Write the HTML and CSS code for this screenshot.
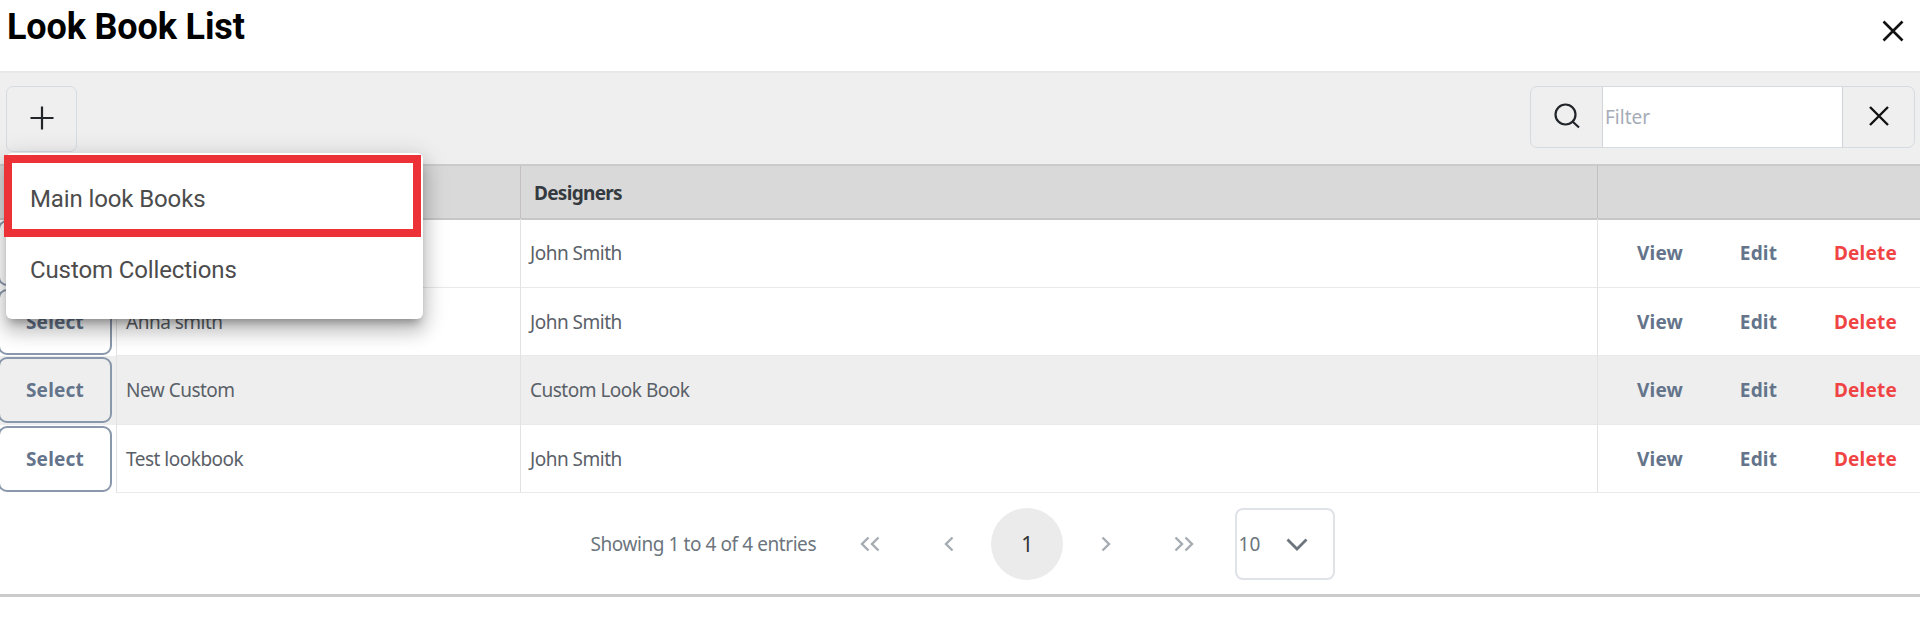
FILE: index.html
```
<!DOCTYPE html>
<html lang="en">
<head>
<meta charset="UTF-8">
<meta name="viewport" content="width=device-width, initial-scale=1.0">
<title>Look Book List</title>
<link rel="stylesheet" href="styles.css">
</head>
<body>
<div class="dialog">
    <div class="header">
        <h1>Look Book List</h1>
        <svg class="close" width="22" height="22" viewBox="0 0 22 22"><path d="M1.5 1.5L20.5 20.5M20.5 1.5L1.5 20.5"/></svg>
    </div>
    <div class="toolbar">
        <div class="add">
            <button class="add-btn" aria-label="Add"><svg width="24" height="24" viewBox="0 0 24 24"><path d="M12 .5V23.5M.5 12H23.5"/></svg></button>
            <div class="menu">
                <div class="item active"><span>Main look Books</span></div>
                <div class="item"><span>Custom Collections</span></div>
            </div>
        </div>
        <div class="search">
            <span class="addon"><svg width="26" height="26" viewBox="0 0 26 26"><circle cx="11.5" cy="11.5" r="10"/><path d="M18.5 18.5L25 24.5"/></svg></span>
            <input type="text" placeholder="Filter">
            <span class="addon"><svg class="clear" width="20" height="20" viewBox="0 0 20 20"><path d="M1 1L19 19M19 1L1 19"/></svg></span>
        </div>
    </div>
    <div class="table">
        <div class="row head">
            <div></div>
            <div></div>
            <div class="cell"><span>Designers</span></div>
            <div></div>
        </div>
        <div class="row">
            <div><button class="select" aria-label="Select"></button></div>
            <div class="cell"></div>
            <div class="cell">John Smith</div>
            <div class="actions"><a>View</a><a>Edit</a><a class="delete">Delete</a></div>
        </div>
        <div class="row">
            <div><button class="select">Select</button></div>
            <div class="cell">Anna smith</div>
            <div class="cell">John Smith</div>
            <div class="actions"><a>View</a><a>Edit</a><a class="delete">Delete</a></div>
        </div>
        <div class="row hover">
            <div><button class="select">Select</button></div>
            <div class="cell">New Custom</div>
            <div class="cell">Custom Look Book</div>
            <div class="actions"><a>View</a><a>Edit</a><a class="delete">Delete</a></div>
        </div>
        <div class="row">
            <div><button class="select">Select</button></div>
            <div class="cell">Test lookbook</div>
            <div class="cell">John Smith</div>
            <div class="actions"><a>View</a><a>Edit</a><a class="delete">Delete</a></div>
        </div>
    </div>
    <div class="paginator">
        <span class="info">Showing 1 to 4 of 4 entries</span>
        <span class="page"><svg width="20" height="16" viewBox="0 0 20 16"><path d="M8.5 1.5L2 8L8.5 14.5M18.5 1.5L12 8L18.5 14.5"/></svg></span>
        <span class="page"><svg width="10" height="16" viewBox="0 0 10 16"><path d="M8.5 1.5L2 8L8.5 14.5"/></svg></span>
        <span class="page current">1</span>
        <span class="page"><svg width="10" height="16" viewBox="0 0 10 16"><path d="M1.5 1.5L8 8L1.5 14.5"/></svg></span>
        <span class="page"><svg width="20" height="16" viewBox="0 0 20 16"><path d="M1.5 1.5L8 8L1.5 14.5M11.5 1.5L18 8L11.5 14.5"/></svg></span>
        <div class="rows-per-page">
            <span>10</span>
            <svg width="22" height="13" viewBox="0 0 22 13"><path d="M1.5 1.5L11 11L20.5 1.5"/></svg>
        </div>
    </div>
</div>
</body>
</html>
```
FILE: styles.css
```
*{margin:0;padding:0;box-sizing:border-box;}
body
{
    background: #fff;
    color: #5a6068;
    font-family: "Noto Sans", "Open Sans", sans-serif;
    font-size: 19px;
    overflow: hidden;
}
svg
{
    display: block;
    fill: none;
    stroke: #212529;
    stroke-width: 2.2;
}
.dialog
{
    height: 597px;
    border-bottom: 3px solid #cbcbcb;
}
.header
{
    display: flex;
    justify-content: space-between;
    height: 71px;
    padding: 6px 16px 0 7px;
    color: #000;
}
.header h1
{
    font: 700 36px/43px Roboto, sans-serif;
    letter-spacing: -.15px;
}
.close
{
    margin-top: 14px;
    stroke: #111;
    stroke-width: 2.6;
}
.toolbar
{
    display: flex;
    justify-content: space-between;
    height: 93px;
    padding: 13px 5px 0 6px;
    background: #efefef;
    border-top: 2px solid #e6e8ea;
}
.add
{
    position: relative;
}
.add-btn
{
    display: flex;
    align-items: center;
    justify-content: center;
    width: 71px;
    height: 66px;
    background: none;
    border: 1px solid #d6dbe0;
    border-radius: 7px;
}
.add-btn svg
{
    margin-bottom: 2px;
}
.menu
{
    position: absolute;
    z-index: 2;
    top: 67px;
    left: 0;
    width: 417px;
    height: 166px;
    background: #fff;
    border-radius: 6px;
    box-shadow: 0 7px 9px -4px rgba(0,0,0,.3), 0 12px 18px 2px rgba(0,0,0,.16), 0 5px 24px 4px rgba(0,0,0,.12);
}
.item
{
    display: flex;
    align-items: center;
    height: 66px;
    padding-left: 24px;
    color: #4c4c4c;
    font: 24px Roboto, sans-serif;
    letter-spacing: -.12px;
}
.item.active
{
    width: 417px;
    height: 82px;
    margin: 2px 0 0 -2px;
    padding-left: 18px;
    padding-top: 5px;
    border: 8px solid #ed3237;
}
.search
{
    display: flex;
    width: 385px;
    height: 62px;
    border: 1px solid #d6dbe0;
    border-radius: 7px;
}
.addon
{
    display: flex;
    align-items: center;
    justify-content: center;
    width: 71px;
}
.addon svg
{
    margin-bottom: 2px;
}
.search input
{
    flex: 1;
    min-width: 0;
    padding-left: 2px;
    border: solid #ced4da;
    border-width: 0 1px;
    color: #495057;
    font: inherit;
}
.search input::placeholder
{
    color: #a5acb8;
}
.clear
{
    stroke: #111;
    stroke-width: 2.4;
}
.row
{
    display: grid;
    grid-template-columns: 116px 404px 1077px 1fr;
    height: 68.5px;
    letter-spacing: -.5px;
}
.row > div
{
    display: flex;
    align-items: center;
    border-bottom: 1px solid #e9e9e9;
}
.row > div + div
{
    border-left: 1px solid #e2e2e2;
}
.row > div:first-child
{
    border-bottom-color: transparent;
}
.row .cell
{
    padding: 1px 8px 0 9px;
}
.row.head
{
    height: 56px;
    margin-bottom: -1px;
    background: #d9d9d9;
    border-top: 2px solid #cbcbcb;
    border-bottom: 2px solid #c6c6c6;
    color: #343a40;
    font-weight: 700;
    letter-spacing: -.7px;
}
.row.head > div
{
    border-bottom: 0;
    border-color: #c4bfc0;
}
.row.head .cell
{
    padding-left: 13px;
}
.row.hover
{
    background: #eee;
}
.select
{
    flex: none;
    width: 114px;
    height: 66px;
    margin: 1px 0 0 -2px;
    background: none;
    border: 2px solid #8a98ab;
    border-radius: 9px;
    color: #64748b;
    font: inherit;
    font-weight: 700;
    letter-spacing: .2px;
}
.actions
{
    justify-content: space-between;
    padding: 1px 23px 0 39px;
    color: #64748b;
    font-weight: 700;
    letter-spacing: .2px;
}
.delete
{
    color: #f04444;
}
.paginator
{
    display: flex;
    align-items: center;
    justify-content: center;
    height: 102px;
    padding-left: 5px;
    color: #6c757d;
}
.info
{
    margin-right: 15px;
    letter-spacing: -.42px;
}
.page
{
    display: flex;
    align-items: center;
    justify-content: center;
    width: 72px;
    height: 72px;
    margin: 0 3.25px;
    border-radius: 50%;
}
.page svg
{
    stroke: #a6acb1;
    stroke-width: 2.4;
}
.current
{
    background: #ebebeb;
    color: #333;
    font-size: 21px;
}
.rows-per-page
{
    display: flex;
    align-items: center;
    justify-content: space-between;
    width: 100px;
    height: 72px;
    margin-left: 11px;
    padding: 0 25px 0 2px;
    border: 2px solid #dfe3e8;
    border-radius: 8px;
}
.rows-per-page svg
{
    stroke: #6c757d;
    stroke-width: 2.8;
}
```
